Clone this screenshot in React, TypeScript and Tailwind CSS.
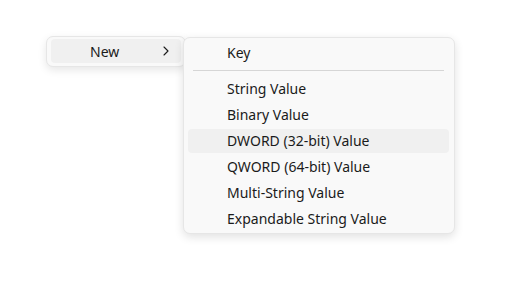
const items = [
  "String Value",
  "Binary Value",
  "DWORD (32-bit) Value",
  "QWORD (64-bit) Value",
  "Multi-String Value",
  "Expandable String Value",
];

const Chevron = () => (
  <svg width="8" height="10" viewBox="0 0 8 10" fill="none" stroke="#1b1b1b" strokeWidth="1.1" strokeLinecap="round" strokeLinejoin="round">
    <path d="M2 1l4 4-4 4" />
  </svg>
);

export default function App() {
  return (
    <div
      className="w-[527px] h-[306px] bg-white text-[#1b1b1b] text-[14px] leading-none"
      style={{ fontFamily: '"Noto Sans", "Open Sans", sans-serif' }}
    >
      <div className="flex items-start pt-[36px] pl-[46px]">
        {/* parent menu */}
        <div className="w-[140px] bg-[#f9f9f9] border border-[#e6e6e6] rounded-[7px] pt-[2px] pb-[3px] px-[4px] shadow-[0_3px_8px_rgba(0,0,0,0.10)]">
          <div className="h-[24px] rounded-[4px] bg-[#f0f0f0] flex items-center pl-[39px] pr-[11px]">
            <span className="flex-1 pt-px">New</span>
            <Chevron />
          </div>
        </div>

        {/* submenu */}
        <div className="relative z-10 -ml-[3px] mt-px w-[272px] flex flex-col gap-[2px] bg-[#f9f9f9] border border-[#e6e6e6] rounded-[7px] pt-[3px] pb-[2px] pl-[4px] pr-[5px] shadow-[0_3px_10px_rgba(0,0,0,0.12)]">
          <div className="h-[24px] rounded-[4px] flex items-center pl-[39px]">Key</div>
          <div className="mt-[3px] mb-[4px] mx-[5px] h-px bg-[#d6d6d6]" />
          {items.map((label) => (
            <div
              key={label}
              className={`h-[24px] rounded-[4px] flex items-center pl-[39px] ${
                label.startsWith("DWORD") ? "bg-[#f0f0f0]" : ""
              }`}
            >
              {label}
            </div>
          ))}
        </div>
      </div>
    </div>
  );
}
